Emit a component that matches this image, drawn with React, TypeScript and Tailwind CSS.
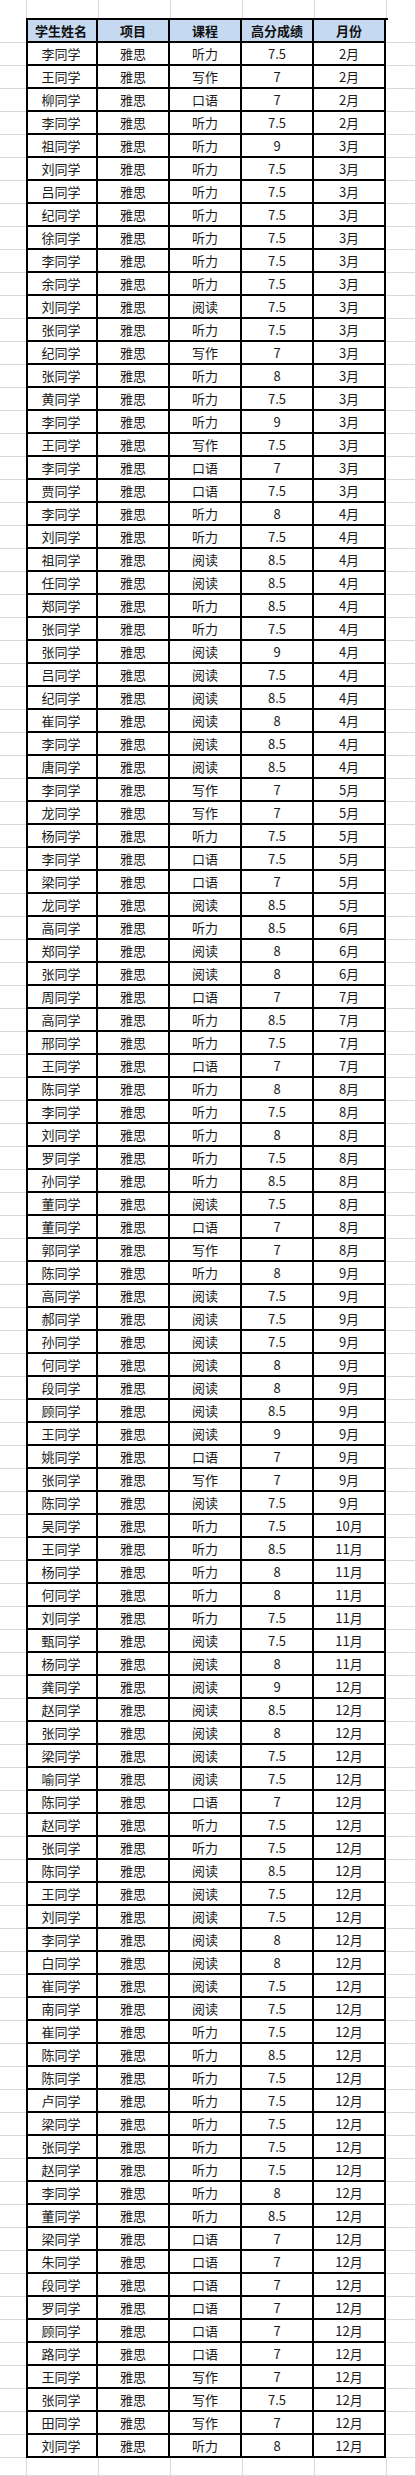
import React from "react";

const raw = `李 听力 7.5 2
王 写作 7 2
柳 口语 7 2
李 听力 7.5 2
祖 听力 9 3
刘 听力 7.5 3
吕 听力 7.5 3
纪 听力 7.5 3
徐 听力 7.5 3
李 听力 7.5 3
余 听力 7.5 3
刘 阅读 7.5 3
张 听力 7.5 3
纪 写作 7 3
张 听力 8 3
黄 听力 7.5 3
李 听力 9 3
王 写作 7.5 3
李 口语 7 3
贾 口语 7.5 3
李 听力 8 4
刘 听力 7.5 4
祖 阅读 8.5 4
任 阅读 8.5 4
郑 听力 8.5 4
张 听力 7.5 4
张 阅读 9 4
吕 阅读 7.5 4
纪 阅读 8.5 4
崔 阅读 8 4
李 阅读 8.5 4
唐 阅读 8.5 4
李 写作 7 5
龙 写作 7 5
杨 听力 7.5 5
李 口语 7.5 5
梁 口语 7 5
龙 阅读 8.5 5
高 听力 8.5 6
郑 阅读 8 6
张 阅读 8 6
周 口语 7 7
高 听力 8.5 7
邢 听力 7.5 7
王 口语 7 7
陈 听力 8 8
李 听力 7.5 8
刘 听力 8 8
罗 听力 7.5 8
孙 听力 8.5 8
董 阅读 7.5 8
董 口语 7 8
郭 写作 7 8
陈 听力 8 9
高 阅读 7.5 9
郝 阅读 7.5 9
孙 阅读 7.5 9
何 阅读 8 9
段 阅读 8 9
顾 阅读 8.5 9
王 阅读 9 9
姚 口语 7 9
张 写作 7 9
陈 阅读 7.5 9
吴 听力 7.5 10
王 听力 8.5 11
杨 听力 8 11
何 听力 8 11
刘 听力 7.5 11
甄 阅读 7.5 11
杨 阅读 8 11
龚 阅读 9 12
赵 阅读 8.5 12
张 阅读 8 12
梁 阅读 7.5 12
喻 阅读 7.5 12
陈 口语 7 12
赵 听力 7.5 12
张 听力 7.5 12
陈 阅读 8.5 12
王 阅读 7.5 12
刘 阅读 7.5 12
李 阅读 8 12
白 阅读 8 12
崔 阅读 7.5 12
南 阅读 7.5 12
崔 听力 7.5 12
陈 听力 8.5 12
陈 听力 7.5 12
卢 听力 7.5 12
梁 听力 7.5 12
张 听力 7.5 12
赵 听力 7.5 12
李 听力 8 12
董 听力 8.5 12
梁 口语 7 12
朱 口语 7 12
段 口语 7 12
罗 口语 7 12
顾 口语 7 12
路 口语 7 12
王 写作 7 12
张 写作 7.5 12
田 写作 7 12
刘 听力 8 12`;

const rows = raw.split("\n").map((line) => {
  const [name, course, score, month] = line.trim().split(" ");
  return [name + "同学", "雅思", course, score, month + "月"];
});

const headers = ["学生姓名", "项目", "课程", "高分成绩", "月份"];

// empty spreadsheet strip above / below the table
function BlankRow({ last }: { last?: boolean }) {
  return (
    <div className={`flex h-[18px] ${last ? "border-b border-[#d9d9d9]" : ""}`}>
      <div className="w-[27px] border-r border-[#d9d9d9]" />
      {headers.map((h) => (
        <div key={h} className="w-[72px] border-r border-[#d9d9d9]" />
      ))}
      <div className="flex-1 border-r border-[#d9d9d9]" />
    </div>
  );
}

function Row({ cells, header }: { cells: string[]; header?: boolean }) {
  return (
    <div className="flex h-[23px]">
      <div className="w-[26px] border-b border-[#d9d9d9]" />
      <div className={`flex ${header ? "bg-[#c5d9f1]" : "bg-white"}`}>
        {cells.map((c, i) => (
          <div
            key={i}
            className={`w-[72px] flex items-center justify-center border-r-2 border-b-2 border-black text-[13px] leading-none ${
              header ? "font-bold text-[#111]" : "text-[#1a1a1a]"
            }`}
          >
            {c}
          </div>
        ))}
      </div>
      <div className="flex-1 border-b border-r border-[#d9d9d9]" />
    </div>
  );
}

export default function App() {
  return (
    <div
      className="w-[416px] h-[2476px] bg-white overflow-hidden"
      style={{ fontFamily: '"Noto Sans CJK SC", "Noto Sans", sans-serif' }}
    >
      <BlankRow />
      <div className="flex">
        <div className="w-[26px]" />
        <div className="w-[362px] h-[2px] bg-black" />
        <div className="flex-1 border-r border-[#d9d9d9]" />
      </div>
      <div className="relative">
        <div className="absolute left-[26px] top-0 bottom-0 w-[2px] bg-black" />
        <Row cells={headers} header />
        {rows.map((r, i) => (
          <Row key={i} cells={r} />
        ))}
      </div>
      <BlankRow last />
    </div>
  );
}
